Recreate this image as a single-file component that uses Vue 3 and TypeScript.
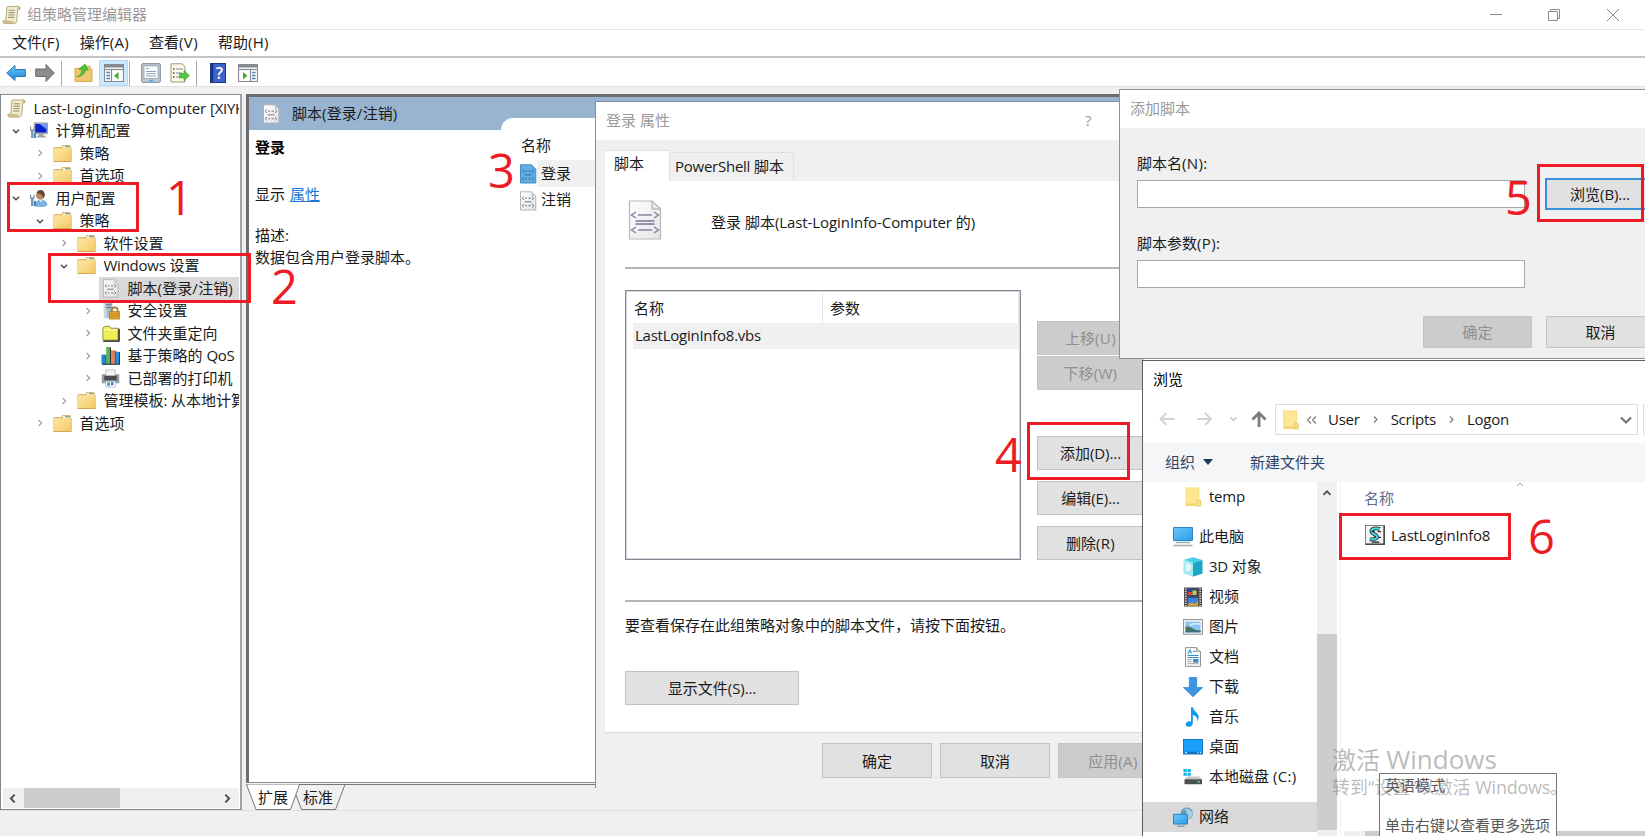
<template>
  <div class="desktop">
    <!-- Icon symbols -->
    <svg class="sprite" width="0" height="0" aria-hidden="true">
      <defs>
        <linearGradient id="g-folder" x1="0" y1="0" x2="1" y2="1">
          <stop offset="0" stop-color="#ffeaa8" />
          <stop offset="1" stop-color="#f3c766" />
        </linearGradient>
        <linearGradient id="g-screen" x1="0" y1="0" x2="1" y2="1">
          <stop offset="0" stop-color="#6cc8fb" />
          <stop offset="1" stop-color="#2a9be6" />
        </linearGradient>
        <linearGradient id="g-blue" x1="0" y1="0" x2="0" y2="1">
          <stop offset="0" stop-color="#6cc6f7" />
          <stop offset="1" stop-color="#1787d6" />
        </linearGradient>
        <linearGradient id="g-paper" x1="0" y1="0" x2="1" y2="1">
          <stop offset="0" stop-color="#ffffff" />
          <stop offset="1" stop-color="#e4e4e4" />
        </linearGradient>
      </defs>
      <symbol id="i-scroll" viewBox="0 0 20 20">
        <path d="M5 2 Q5 1 7 1 H17.5 Q19.5 1.5 19 4 H16.5 L15.5 16.5 Q15 19 12.5 19 H2.5 Q.5 18.5 1 16 H4 Z" fill="#f4ecc9" stroke="#a89a72" stroke-width=".9" />
        <path d="M1 16 H12 Q11.5 19 13 19 H2.5 Q.5 18.5 1 16 Z" fill="#cdbb8a" />
        <path d="M16.5 4 H19 Q19.6 1.4 17.6 1 Q16.2 1.2 16.5 4 Z" fill="#c4b180" />
        <path d="M7 5 h6.5 M6.8 7.5 h6.5 M6.6 10 h6.5 M6.4 12.5 h6.5" stroke="#9a9684" stroke-width="1.1" />
      </symbol>
      <symbol id="i-folder" viewBox="0 0 18 18">
        <path d="M.5 3 H8 L9 1 H16 L17 2.2 V4 H17.6 V17 H.5 Z" fill="#d3a64f" />
        <path d="M9.3 1.6 H15.8 V4 H9 Z" fill="#fff6d8" />
        <path d="M11.5 1.8 h4 v1.4 h-4 z" fill="#5aa5d8" />
        <path d="M1 4 H8.5 L9.5 3.6 H17 V16.2 H1 Z" fill="url(#g-folder)" />
      </symbol>
      <symbol id="i-folder-plain" viewBox="0 0 18 22">
        <path d="M1 .5 H16 V14 L17.5 15 V21 H1 Z" fill="#f7d774" />
        <path d="M2 1.5 H15 V18 H2 Z" fill="#fde695" />
        <path d="M13.5 14.5 H17.5 V21 H13.5 Z" fill="#fbe08a" stroke="#e2b94c" stroke-width=".6" />
      </symbol>
      <symbol id="i-computer" viewBox="0 0 20 18">
        <rect x="5.5" y="1" width="14" height="11.5" fill="#d4d4d4" stroke="#8d8d8d" stroke-width=".8" />
        <rect x="6.5" y="2" width="12" height="9.3" fill="#0b24c8" />
        <path d="M11 2 H18.5 V8 Z" fill="#6f9cf3" />
        <path d="M10 12.5 h5 v2 h2.5 v1.8 h-9 v-1.8 h1.5 z" fill="#a3a3a3" />
        <path d="M1 4.5 v4 l1.2 1.5 v7 h2.4 v-7 l1.4 -1.5 v-4 h-1.2 v3.2 h-2.6 v-3.2 z" fill="#7d99ab" />
        <path d="M5 12 h2.4 v5 h-2.4 z" fill="#3b8fd0" />
      </symbol>
      <symbol id="i-user" viewBox="0 0 20 20">
        <path d="M6.5 18.5 Q6 11.5 12.5 11 Q19.5 11.5 19.5 17 Q16 20 6.5 18.5 Z" fill="#7db2de" />
        <circle cx="12" cy="6.5" r="4.6" fill="#b98a5e" />
        <path d="M8 4.5 Q8.5 1 12.5 1 Q17 1.5 16.5 7 L15 9.5 Q14.8 5 8 4.5 Z" fill="#5e4a3a" />
        <path d="M10.5 11.5 l2 2.5 l2 -2.5 z" fill="#dcebf7" />
        <path d="M1 6 v3.5 l1.2 1.5 v7 h2.4 v-7 l1.4 -1.5 v-3.5 h-1.2 v3 h-2.6 v-3 z" fill="#7390a8" />
        <path d="M5.2 12.5 h2.2 v5.5 h-2.2 z" fill="#4b7fc0" />
      </symbol>
      <symbol id="i-script" viewBox="0 0 18 20">
        <path d="M1.5 .8 H12.5 L16.8 5 V19 H1.5 Z" fill="url(#g-paper)" stroke="#b3b3b3" />
        <path d="M12.5 .8 V5 H16.8 Z" fill="#cfcfcf" />
        <path d="M5 5.5 L3.2 7.2 L5 9 M13 5.5 L14.8 7.2 L13 9 M6 7.2 h2 M9.5 7.2 h2.5 M5.5 10.8 h7 M5 13 L3.2 14.7 L5 16.4 M13 13 L14.8 14.7 L13 16.4 M6 14.7 h2 M9.5 14.7 h2.5" fill="none" stroke="#77748c" stroke-width="1" />
      </symbol>
      <symbol id="i-script-blue" viewBox="0 0 18 20">
        <path d="M1.5 .8 H12.5 L16.8 5 V19 H1.5 Z" fill="#62acdf" stroke="#3f8fcb" />
        <path d="M5 5.5 L3.2 7.2 L5 9 M13 5.5 L14.8 7.2 L13 9 M6 7.2 h2 M9.5 7.2 h2.5 M5.5 10.8 h7 M5 13 L3.2 14.7 L5 16.4 M13 13 L14.8 14.7 L13 16.4 M6 14.7 h2 M9.5 14.7 h2.5" fill="none" stroke="#2f6fa8" stroke-width="1" />
      </symbol>
      <symbol id="i-script-large" viewBox="0 0 34 40">
        <path d="M1.5 1 H24 L32.5 9 V39 H1.5 Z" fill="url(#g-paper)" stroke="#b9b9b9" stroke-width="1.2" />
        <path d="M24 1 V9 H32.5 Z" fill="#e9e9e9" stroke="#a8a8a8" />
        <path d="M8 12 L3.5 15 L8 18 M26 12 L30.5 15 L26 18 M10 15 H24 M8 27 L3.5 30 L8 33 M26 27 L30.5 30 L26 33 M10 30 H24" fill="none" stroke="#8884a6" stroke-width="1.5" />
        <path d="M7.5 21 H26.5 M7.5 24 H26.5" stroke="#77739a" stroke-width="1.5" />
      </symbol>
      <symbol id="i-security" viewBox="0 0 20 20">
        <path d="M3 1 H12 V18 H3 Z" fill="#a9bccb" />
        <path d="M3 1 H6 V18 H3 Z" fill="#cbd8e2" />
        <path d="M5 4 h6 M5 7 h6" stroke="#54697a" />
        <path d="M11.5 12 V9.5 Q11.5 6.8 14.5 6.8 Q17.5 6.8 17.5 9.5 V12" fill="none" stroke="#9c8238" stroke-width="1.8" />
        <rect x="9" y="11" width="10.5" height="8" fill="#e0a62c" stroke="#a87714" stroke-width=".7" />
        <path d="M9.5 13.5 h9.5 M9.5 16 h9.5" stroke="#b98419" stroke-width=".8" />
      </symbol>
      <symbol id="i-redirect" viewBox="0 0 20 18">
        <path d="M2 3.5 L3.5 1.5 H9 L10.5 3.5 H18 V16 H2 Z" fill="#f0ee56" stroke="#8f8c40" />
        <path d="M19 4 V17 H2.5" fill="none" stroke="#111" stroke-width="1.4" />
        <path d="M3 5 h14.5" stroke="#ffffd0" />
      </symbol>
      <symbol id="i-qos" viewBox="0 0 20 20">
        <path d="M.5 9 h4 v10 h-4 z" fill="#1b8ad0" />
        <path d="M5.5 1 h4 v18 h-4 z" fill="#56b648" />
        <path d="M10.5 4.5 h4 v14.5 h-4 z" fill="#ee7d55" />
        <path d="M15.5 6 h3.6 v13 h-3.6 z" fill="#2a8fdc" />
        <path d="M5 9.5 V19.5 M10 1.5 V19.5 M15 5 V19.5 M19.5 6.5 V19.5 M1 19.3 H19.5" stroke="#1d2b38" />
      </symbol>
      <symbol id="i-printer" viewBox="0 0 20 20">
        <path d="M5 1 H15 V8 H5 Z" fill="#f3f3f3" stroke="#aeb4ba" stroke-width=".8" />
        <path d="M.8 5.5 H5 V8 H15 V5.5 H19.2 V15 H.8 Z" fill="#979a9e" />
        <path d="M3.5 7 H16.5 V12 H3.5 Z" fill="#4b4d52" />
        <path d="M5 13 H15 V19 H5 Z" fill="#fff" stroke="#a9bcc9" stroke-width=".8" />
        <path d="M6.5 14 h3 v4 h-3 z" fill="#35b3c9" />
        <path d="M10.5 14 h2.5 v3 h-2.5 z" fill="#2d6cb8" />
      </symbol>
      <symbol id="i-chev-down" viewBox="-1 -1 12 12">
        <path d="M2 3.8 L5 6.8 L8 3.8" fill="none" stroke="#4a4a4a" stroke-width="1.4" />
      </symbol>
      <symbol id="i-chev-right" viewBox="-1 -1 12 12">
        <path d="M3.6 2 L6.6 5 L3.6 8" fill="none" stroke="#a3a3a3" stroke-width="1.3" />
      </symbol>
      <symbol id="i-pc" viewBox="0 0 20 20">
        <path d="M.5 .5 H19.5 V13.5 H.5 Z" fill="url(#g-screen)" stroke="#2c86c4" />
        <path d="M3 15.5 H17 M.5 18.5 H19.5" stroke="#9dadb8" stroke-width="1.5" />
      </symbol>
      <symbol id="i-cube" viewBox="0 0 20 20">
        <path d="M.5 3 L10 .3 L19.5 3 L10 6 Z" fill="#47d0e6" />
        <path d="M.5 3 L10 6 V19.7 L.5 16.5 Z" fill="#a5eaf3" />
        <path d="M19.5 3 L10 6 V19.7 L19.5 16.5 Z" fill="#1ba6c8" />
        <path d="M3 6 L8 7.5 V13 L3 15 Z" fill="#dff8fb" />
      </symbol>
      <symbol id="i-video" viewBox="0 0 20 20">
        <rect x="1" y=".5" width="18" height="19" fill="#4c4a48" />
        <path d="M2.8 1.5 V19 M17.2 1.5 V19" stroke="#d8d8d8" stroke-width="1.8" stroke-dasharray="1.2 1.2" />
        <rect x="5" y="1.5" width="10" height="8" fill="#27498c" />
        <rect x="5" y="10.8" width="10" height="8" fill="#3b80e4" />
        <path d="M5 5 h4 v3 h-4 z" fill="#e8423a" />
        <path d="M9.5 3.5 h4 v4.5 h-4 z" fill="#dfc52c" />
        <path d="M5 18.8 V17 L9 15.5 L12 17 L15 13.5 V18.8 Z" fill="#e0a52a" />
      </symbol>
      <symbol id="i-picture" viewBox="0 0 20 16">
        <rect x=".6" y=".6" width="18.8" height="14.6" fill="#fff" stroke="#929292" stroke-width="1.1" />
        <rect x="2.5" y="2.5" width="15" height="10.8" fill="#8cc5f4" />
        <path d="M2.5 7.5 Q7 7 10 9.5 T17.5 11 V13.3 H2.5 Z" fill="#47745e" />
        <path d="M7 6 q4 -2 10 -1" stroke="#e4f2fd" stroke-width="1.5" fill="none" />
        <path d="M2.5 12 h15 v1.3 h-15 z" fill="#3b6e93" />
      </symbol>
      <symbol id="i-document" viewBox="0 0 18 20">
        <path d="M1.5 .6 H12.5 L16.5 4.5 V19.4 H1.5 Z" fill="#fafafa" stroke="#929292" />
        <path d="M12.5 .6 V4.5 H16.5" fill="#d8d8d8" stroke="#929292" stroke-width=".8" />
        <path d="M4 7 L6 3 L7.5 6.5 M9 4.5 h2.5 M3.5 8.5 h11 M3.5 10.5 h11" stroke="#2a92d4" fill="none" stroke-width="1.1" />
        <path d="M3.5 12.7 h4 M3.5 14.7 h4 M3.5 16.7 h11" stroke="#a4a4a4" />
        <rect x="9" y="12" width="5.5" height="3.6" fill="#3b8bc6" />
      </symbol>
      <symbol id="i-download" viewBox="0 0 20 20">
        <path d="M6.3 .3 H13.7 V10.5 H19.7 L10 19.8 L.3 10.5 H6.3 Z" fill="#3b95e0" stroke="#2178c4" stroke-width=".6" />
      </symbol>
      <symbol id="i-music" viewBox="0 0 20 20">
        <path d="M8 .3 H9.8 Q10.5 3.5 13.5 5.5 Q17.5 9 14 14.5 Q15.2 9 9.8 8 V16.5 Q9.5 19.6 6 19.7 Q2.5 19.6 2.6 17.2 Q3 14.8 6.5 14.3 L8 14.4 Z" fill="#0a9af8" />
      </symbol>
      <symbol id="i-desktop" viewBox="0 0 20 16">
        <rect x=".5" y=".5" width="19" height="14.5" fill="#18a0fb" stroke="#1277c0" />
        <path d="M1 12.8 H19 V14.6 H1 Z" fill="#0c6fbe" />
        <path d="M2 13.7 h2 M14.5 13.7 h1.2 M17 13.7 h1.2" stroke="#fff" />
      </symbol>
      <symbol id="i-disk" viewBox="0 0 20 18">
        <path d="M.5 1 h3.3 v3 h-3.3 z M4.5 1 h3.3 v3 h-3.3 z M.5 4.7 h3.3 v3 h-3.3 z M4.5 4.7 h3.3 v3 h-3.3 z" fill="#13b1ea" />
        <path d="M4 8.5 H16.5 L19 11.5 H1.5 Z" fill="#c6c9cb" />
        <rect x="1.5" y="11.3" width="17.5" height="4.9" rx=".8" fill="#4c4f52" />
        <path d="M14.5 13.8 h2.5" stroke="#48e05b" stroke-width="1.5" />
      </symbol>
      <symbol id="i-network" viewBox="0 0 20 20">
        <circle cx="13.8" cy="6.6" r="6.2" fill="#5e9fc0" />
        <path d="M11 2 Q15 4 13 7 T16 12 Q20 9 19.5 5.5 Q16 .5 11 2 Z" fill="#a9d0dd" />
        <path d="M.5 7.3 H14.5 V17 H.5 Z" fill="url(#g-screen)" stroke="#2382c2" />
        <path d="M4 19.2 H11.5" stroke="#8c9ba6" stroke-width="1.5" />
      </symbol>
      <symbol id="i-vbs" viewBox="0 0 21 21">
        <rect x=".5" y=".5" width="20" height="20" fill="#f5f5f5" stroke="#777" />
        <path d="M20 1 V20 H1" fill="none" stroke="#333" stroke-width="1.4" />
        <path d="M15.5 4.5 Q12 2.8 8 4.3 Q5 6.5 9 9.2 Q13 11 12.5 13.2 Q11 15.5 5 15" fill="none" stroke="#222" stroke-width="4" />
        <path d="M15.5 4.5 Q12 2.8 8 4.3 Q5 6.5 9 9.2 Q13 11 12.5 13.2 Q11 15.5 5 15" fill="none" stroke="#3fd3da" stroke-width="2.4" />
        <path d="M7 18 h8 M13 7 h4 M7 6.8 h3 M9.5 12.5 h2 M14.5 13 h2" stroke="#111" stroke-width="1.1" />
      </symbol>
    </svg>

    <!-- Policy editor window -->
    <section class="editor">
      <header class="editor__title">
        <svg class="editor__logo"><use href="#i-scroll" /></svg>
        <span class="editor__caption">组策略管理编辑器</span>
        <svg class="editor__controls" viewBox="0 0 136 20">
          <path d="M0 9.5 H12" stroke="#8b8b8b" />
          <path d="M58.5 6.5 h9 v9 h-9 z M60.5 6.5 v-2 h9 v9 h-2" fill="none" stroke="#8b8b8b" />
          <path d="M117 4 L129 16 M129 4 L117 16" stroke="#8b8b8b" />
        </svg>
      </header>

      <nav class="editor__menu">
        <Txt v-for="m in menus" :key="m" :s="m" />
      </nav>

      <div class="editor__toolbar">
        <svg class="tool" viewBox="0 0 20 20">
          <path d="M.7 10 L9 2.5 V6.5 H19.3 V13.5 H9 V17.5 Z" fill="url(#g-blue)" stroke="#2b77ad" />
        </svg>
        <svg class="tool tool--forward" viewBox="0 0 20 20">
          <path d="M19.3 10 L11 1.5 V6 H.7 V13.5 H11 V18.5 Z" fill="#8c8c8c" stroke="#6e6e6e" />
        </svg>
        <i class="editor__sep" />
        <svg class="tool tool--up" viewBox="0 0 20 20">
          <path d="M1 5 H8 L9.5 3 H17 V6 H19 V19 H1 Z" fill="#efc76e" stroke="#c99c3d" stroke-width=".8" />
          <path d="M3 14 Q8 12 8.5 6.5 L5 6 L11.5 .5 L15 7 L12 6.8 Q11 13.5 3 14 Z" fill="#4cc13c" stroke="#2f9926" stroke-width=".6" />
        </svg>
        <span class="tool-active">
          <svg class="tool" viewBox="0 0 20 20">
            <rect x=".5" y="1.5" width="19" height="17" fill="#f4f4f4" stroke="#868b92" />
            <path d="M1 2 h18 v2.5 h-18 z" fill="#848c96" />
            <path d="M1 6.5 H19 M7.5 7 V18" stroke="#868b92" />
            <path d="M2.5 9.5 h3.5 M2.5 12.5 h3.5 M2.5 15.5 h3.5" stroke="#5385b8" stroke-width="1.3" />
            <rect x="9" y="8" width="8.5" height="9.5" fill="#fff" />
            <path d="M14.5 9 V16.5 L10 12.7 Z" fill="#3dae33" />
          </svg>
        </span>
        <i class="editor__sep editor__sep--tight" />
        <svg class="tool tool--props" viewBox="0 0 20 20">
          <rect x=".7" y=".7" width="18.6" height="18.6" rx="1" fill="#c3ccd6" stroke="#7d8791" />
          <rect x="3" y="3" width="14" height="12.5" fill="#fff" stroke="#94a1ae" stroke-width=".8" />
          <path d="M5 5.5 h3 M5 8.5 h10 M5 10.7 h10 M5 13 h10" stroke="#8ba1b8" />
          <path d="M8 17.5 h4" stroke="#28b4e6" stroke-width="1.6" />
        </svg>
        <svg class="tool tool--export" viewBox="0 0 20 20">
          <path d="M1 .8 H12 L15 4 V19 H1 Z" fill="#fdf8e4" stroke="#9c9680" />
          <path d="M3 6 h1.5 M3 10 h1.5 M3 14 h1.5" stroke="#444" stroke-width="1.4" />
          <path d="M6 6 h7 M6 10 h6 M6 14 h6" stroke="#8a85a8" stroke-width="1.1" />
          <path d="M9.5 10.5 H14 V7.5 L19.5 12.7 L14 17.8 V15 H9.5 Z" fill="#55c644" stroke="#3a9e2d" stroke-width=".6" />
        </svg>
        <i class="editor__sep editor__sep--mid" />
        <svg class="tool tool--help" viewBox="0 0 16 20">
          <rect x=".5" y=".5" width="15" height="19" fill="#3f63cc" stroke="#1b3686" />
          <path d="M1 1 h2.3 v18 h-2.3 z" fill="#1a3488" />
          <text x="9.4" y="15.8" text-anchor="middle" class="tool__mark">?</text>
        </svg>
        <svg class="tool tool--pane" viewBox="0 0 20 20">
          <rect x=".5" y="1.5" width="19" height="17" fill="#f4f4f4" stroke="#868b92" />
          <path d="M1 2 h18 v2.5 h-18 z" fill="#848c96" />
          <path d="M1 6.5 H19 M12.5 7 V18" stroke="#868b92" />
          <path d="M14 9.5 h3.5 M14 12.5 h3.5 M14 15.5 h3.5" stroke="#5385b8" stroke-width="1.3" />
          <rect x="2.5" y="8" width="8.5" height="9.5" fill="#fff" />
          <path d="M5 9 V16.5 L9.5 12.7 Z" fill="#3dae33" />
        </svg>
      </div>

      <div class="editor__body">
        <!-- Navigation tree -->
        <div class="tree">
          <div class="tree__rows">
            <div v-for="(n, i) in tree" :key="i" :class="['node', `node--l${n.level}`]">
              <svg v-if="n.level > 0" class="node__chev">
                <use v-if="n.state" :href="n.state === 'open' ? '#i-chev-down' : '#i-chev-right'" />
              </svg>
              <span :class="['node__main', { 'node__main--selected': n.selected }]">
                <svg class="node__icon"><use :href="`#i-${n.icon}`" /></svg>
                <Txt class="node__label" :s="n.label" />
              </span>
            </div>
          </div>
          <div class="tree__scroll">
            <svg class="tree__arrow" viewBox="0 0 10 10"><path d="M7 1.5 L3.5 5 L7 8.5" fill="none" stroke="#505050" stroke-width="1.8" /></svg>
            <i class="tree__thumb" />
            <svg class="tree__arrow tree__arrow--end" viewBox="0 0 10 10"><path d="M3 1.5 L6.5 5 L3 8.5" fill="none" stroke="#505050" stroke-width="1.8" /></svg>
          </div>
        </div>

        <!-- Result pane -->
        <div class="result">
          <div class="result__frame">
            <div class="result__head">
              <svg class="result__icon"><use href="#i-script" /></svg>
              <Txt class="result__title" s="脚本(登录/注销)" />
            </div>
            <div class="result__cols">
              <div class="result__desc">
                <b>登录</b>
                <p class="result__show">显示 <a>属性</a></p>
                <p class="result__about">描述:<br>数据包含用户登录脚本。</p>
              </div>
              <div class="result__list">
                <div class="result__colhead">名称</div>
                <div class="result__item result__item--active">
                  <svg><use href="#i-script-blue" /></svg><span>登录</span>
                </div>
                <div class="result__item">
                  <svg><use href="#i-script" /></svg><span>注销</span>
                </div>
              </div>
            </div>
          </div>
          <div class="result__tabs">
            <svg class="result__tabshape" viewBox="0 0 102 28">
              <path d="M50 11 L55.5 25.5 H89.5 L99 .5" fill="#f0f0f0" stroke="#777" />
              <path d="M.5 .5 L10 25.5 H44.5 L53.5 .5" fill="#fff" stroke="#777" />
              <path d="M53.5 .5 H102" stroke="#777" />
            </svg>
            <span>扩展</span><span>标准</span>
          </div>
        </div>
      </div>
      <footer class="editor__status" />
    </section>

    <!-- Logon properties dialog -->
    <section class="props">
      <header class="props__title"><span>登录 属性</span><span class="props__help">?</span></header>
      <div class="props__tabs">
        <span class="props__tab props__tab--active">脚本</span>
        <span class="props__tab"><Txt s="PowerShell 脚本" /></span>
      </div>
      <div class="props__page">
        <div class="props__intro">
          <svg><use href="#i-script-large" /></svg>
          <Txt s="登录 脚本(Last-LoginInfo-Computer 的)" />
        </div>
        <hr class="props__rule">
        <div class="props__main">
          <div class="listbox">
            <div class="listbox__head"><span>名称</span><span>参数</span></div>
            <div class="listbox__row"><Txt s="LastLoginInfo8.vbs" /></div>
          </div>
          <div class="props__side">
            <span v-for="b in sideButtons" :key="b.label" :class="['btn', { 'btn--disabled': b.disabled, 'btn--gap': b.gap }]">
              <Txt :s="b.label" />
            </span>
          </div>
        </div>
        <hr class="props__rule props__rule--low">
        <p class="props__hint">要查看保存在此组策略对象中的脚本文件，请按下面按钮。</p>
        <span class="btn btn--files"><Txt s="显示文件(S)..." /></span>
      </div>
      <footer class="props__foot">
        <span class="btn">确定</span>
        <span class="btn">取消</span>
        <span class="btn btn--disabled"><Txt s="应用(A)" /></span>
      </footer>
    </section>

    <!-- Add script dialog -->
    <section class="addscript">
      <header class="addscript__title">添加脚本</header>
      <div class="addscript__body">
        <Txt class="addscript__label" s="脚本名(N):" />
        <div class="addscript__line">
          <i class="addscript__input" />
          <span class="btn btn--focus"><Txt s="浏览(B)..." /></span>
        </div>
        <Txt class="addscript__label addscript__label--second" s="脚本参数(P):" />
        <div class="addscript__line"><i class="addscript__input" /></div>
        <div class="addscript__foot">
          <span class="btn btn--disabled">确定</span>
          <span class="btn">取消</span>
        </div>
      </div>
    </section>

    <!-- File browser dialog -->
    <section class="browse">
      <header class="browse__title">浏览</header>
      <div class="browse__nav">
        <svg class="browse__arrows" viewBox="0 0 132 30">
          <path d="M31.5 15 H17.5 M23.5 9 L17.5 15 L23.5 21 M54 15 H68 M62 9 L68 15 L62 21" fill="none" stroke="#d2d2d2" stroke-width="1.8" />
          <path d="M87.5 13.5 L90.5 16.5 L93.5 13.5" fill="none" stroke="#cfcfcf" stroke-width="1.8" />
          <path d="M116 23 V9 M109.5 15.5 L116 9 L122.5 15.5" fill="none" stroke="#7b7b7b" stroke-width="2.8" />
        </svg>
        <div class="address">
          <svg class="address__folder"><use href="#i-folder-plain" /></svg>
          <svg class="address__more" viewBox="0 0 12 10"><path d="M5 1.5 L1.5 5 L5 8.5 M10 1.5 L6.5 5 L10 8.5" fill="none" stroke="#777" stroke-width="1.1" /></svg>
          <template v-for="(p, i) in crumbs" :key="p">
            <svg v-if="i > 0" class="address__sep" viewBox="0 0 9 9"><path d="M3 1.5 L6 4.5 L3 7.5" fill="none" stroke="#777" stroke-width="1.1" /></svg>
            <Txt class="address__part" :s="p" />
          </template>
          <svg class="address__drop" viewBox="0 0 12 10"><path d="M1 2.5 L6 7.5 L11 2.5" fill="none" stroke="#777" stroke-width="2.2" /></svg>
        </div>
        <i class="browse__search" />
      </div>
      <div class="browse__bar">
        <span>组织</span><i class="browse__caret" /><span>新建文件夹</span>
      </div>
      <div class="browse__body">
        <div class="places">
          <div v-for="p in places" :key="p.label" :class="['place', { 'place--root': p.root, 'place--selected': p.selected }]">
            <svg><use :href="`#i-${p.icon}`" /></svg>
            <Txt class="place__label" :s="p.label" />
          </div>
        </div>
        <div class="browse__scroll">
          <svg viewBox="0 0 10 10"><path d="M1.5 6.8 L5 3.3 L8.5 6.8" fill="none" stroke="#505050" stroke-width="1.8" /></svg>
          <i />
        </div>
        <div class="files">
          <div class="files__head">
            <span>名称</span>
            <svg viewBox="0 0 8 5"><path d="M1 4 L4 1 L7 4" fill="none" stroke="#999" /></svg>
          </div>
          <div class="files__row">
            <svg><use href="#i-vbs" /></svg>
            <Txt class="files__name" s="LastLoginInfo8" />
          </div>
          <div class="files__hscroll"><i /></div>
        </div>
      </div>
    </section>

    <!-- Input method tooltip and activation watermark -->
    <div class="tooltip"><span>英语模式</span><span>单击右键以查看更多选项</span></div>
    <div class="watermark">
      <Txt class="watermark__title" s="激活 Windows" />
      <Txt class="watermark__text" s="转到“设置”以激活 Windows。" />
    </div>

    <!-- Step annotations -->
    <i v-for="n in [1, 2, 4, 5, 6]" :key="`b${n}`" :class="['mark', `mark--${n}`]" />
    <span v-for="n in 6" :key="`n${n}`" :class="['step', `step--${n}`]">{{ n }}</span>
  </div>
</template>

<script setup lang="ts">
import { h } from 'vue'

interface TreeNode {
  level: number
  label: string
  icon: string
  state?: 'open' | 'closed'
  selected?: boolean
}

interface SideButton {
  label: string
  disabled?: boolean
  gap?: boolean
}

interface Place {
  label: string
  icon: string
  root?: boolean
  selected?: boolean
}

// Words are set a little tighter than the Chinese text, access keys a little wider
const latinClass = (part: string) => {
  if (part.length <= 4 && /[()/]/.test(part)) return 'latin latin--key'
  if (/-|\.\.\./.test(part)) return 'latin latin--long'
  return 'latin'
}

const Txt = (props: { s: string }) =>
  h(
    'span',
    { class: 'txt' },
    props.s
      .split(/([\x21-\x7e]+)/)
      .filter(Boolean)
      .map(part => (/^[\x21-\x7e]/.test(part) ? h('span', { class: latinClass(part) }, part) : part))
  )
Txt.props = ['s']

const menus: string[] = ['文件(F)', '操作(A)', '查看(V)', '帮助(H)']

const tree: TreeNode[] = [
  { level: 0, label: 'Last-LoginInfo-Computer [XIYK', icon: 'scroll' },
  { level: 1, label: '计算机配置', icon: 'computer', state: 'open' },
  { level: 2, label: '策略', icon: 'folder', state: 'closed' },
  { level: 2, label: '首选项', icon: 'folder', state: 'closed' },
  { level: 1, label: '用户配置', icon: 'user', state: 'open' },
  { level: 2, label: '策略', icon: 'folder', state: 'open' },
  { level: 3, label: '软件设置', icon: 'folder', state: 'closed' },
  { level: 3, label: 'Windows 设置', icon: 'folder', state: 'open' },
  { level: 4, label: '脚本(登录/注销)', icon: 'script', selected: true },
  { level: 4, label: '安全设置', icon: 'security', state: 'closed' },
  { level: 4, label: '文件夹重定向', icon: 'redirect', state: 'closed' },
  { level: 4, label: '基于策略的 QoS', icon: 'qos', state: 'closed' },
  { level: 4, label: '已部署的打印机', icon: 'printer', state: 'closed' },
  { level: 3, label: '管理模板: 从本地计算', icon: 'folder', state: 'closed' },
  { level: 2, label: '首选项', icon: 'folder', state: 'closed' }
]

const sideButtons: SideButton[] = [
  { label: '上移(U)', disabled: true },
  { label: '下移(W)', disabled: true },
  { label: '添加(D)...', gap: true },
  { label: '编辑(E)...' },
  { label: '删除(R)' }
]

const crumbs: string[] = ['User', 'Scripts', 'Logon']

const places: Place[] = [
  { label: 'temp', icon: 'folder-plain' },
  { label: '此电脑', icon: 'pc', root: true },
  { label: '3D 对象', icon: 'cube' },
  { label: '视频', icon: 'video' },
  { label: '图片', icon: 'picture' },
  { label: '文档', icon: 'document' },
  { label: '下载', icon: 'download' },
  { label: '音乐', icon: 'music' },
  { label: '桌面', icon: 'desktop' },
  { label: '本地磁盘 (C:)', icon: 'disk' },
  { label: '网络', icon: 'network', root: true, selected: true }
]
</script>

<style>
body {
  margin: 0;
  overflow: hidden;
}

.txt {
  white-space: pre;
}

.txt .latin {
  letter-spacing: -0.25px;
}

.txt .latin--key {
  letter-spacing: 0.35px;
}

.txt .latin--long {
  letter-spacing: -0.08px;
}
</style>

<style scoped>
.desktop {
  position: relative;
  width: 1645px;
  height: 836px;
  overflow: hidden;
  background: #f0f0f0;
  color: #1a1a1a;
  font-family: "Open Sans", "Noto Sans CJK SC", sans-serif;
  font-size: 15px;
  line-height: 20px;
  white-space: nowrap;
}

.desktop *,
.desktop *::before {
  box-sizing: border-box;
}

.desktop svg {
  display: block;
  flex-shrink: 0;
}

.sprite {
  position: absolute;
}

/* Editor window */
.editor {
  display: flex;
  flex-direction: column;
  height: 836px;
}

.editor__title {
  display: flex;
  align-items: center;
  height: 30px;
  padding-left: 2px;
  background: #fff;
  border-bottom: 1px solid #e8e8e8;
}

.editor__logo {
  width: 19px;
  height: 20px;
}

.editor__caption {
  margin-left: 6px;
  padding-bottom: 2px;
  color: #999;
}

.editor__controls {
  width: 136px;
  height: 20px;
  margin-left: auto;
  margin-right: 19px;
}

.editor__menu {
  display: flex;
  align-items: center;
  gap: 20px;
  height: 28px;
  padding: 0 0 2px 12px;
  background: #fff;
  border-bottom: 2px solid #c3c3c8;
}

.editor__toolbar {
  display: flex;
  align-items: center;
  height: 29px;
  padding: 2px 0 0 6px;
  background: #fff;
  border-bottom: 1px solid #e3e3e3;
}

.tool {
  width: 20px;
  height: 20px;
}

.tool--forward {
  margin-left: 9px;
}

.tool--up {
  width: 19px;
  margin-left: 12px;
}

.tool--props {
  margin-left: 11px;
}

.tool--export {
  margin-left: 9px;
}

.tool--help {
  width: 16px;
  margin-left: 13px;
}

.tool--pane {
  margin-left: 12px;
}

.tool__mark {
  fill: #fff;
  font-size: 16px;
  font-weight: 600;
}

.tool-active {
  display: flex;
  align-items: center;
  justify-content: center;
  width: 29px;
  height: 26px;
  margin-left: 6px;
  background: #cce8ff;
  border: 1px solid #b3dcfb;
}

.editor__sep {
  width: 1px;
  height: 25px;
  margin-left: 6px;
  background: #a9a9a9;
}

.editor__sep--tight {
  margin-left: 1px;
}

.editor__body {
  display: flex;
  gap: 4px;
  height: 723px;
  padding-top: 7px;
}

.editor__status {
  flex: 1;
  border-top: 1px solid #dedede;
}

/* Tree */
.tree {
  display: flex;
  flex-direction: column;
  width: 242px;
  height: 716px;
  padding: 2px 1px 1px 2px;
  background: #fff;
  border: 1px solid #828790;
  border-right: 2px solid #9fa3aa;
}

.tree__rows {
  flex: 1;
  overflow: hidden;
}

.node {
  display: flex;
  align-items: center;
  height: 22.5px;
}

.node--l0 {
  padding-left: 1px;
}

.node--l1 {
  padding-left: 7px;
}

.node--l2 {
  padding-left: 31px;
}

.node--l3 {
  padding-left: 55px;
}

.node--l4 {
  padding-left: 79px;
}

.node__chev {
  width: 12px;
  height: 12px;
}

.node__main {
  display: flex;
  flex: 1;
  align-items: center;
  height: 22.5px;
  margin-left: 3px;
}

.node--l1 .node__main,
.node--l2 .node__main,
.node--l3 .node__main,
.node--l4 .node__main {
  margin-left: 5px;
  padding-left: 2px;
}

.node__main--selected {
  background: #d9d9d9;
}

.node__icon {
  width: 19px;
  height: 19px;
}

.node__label {
  margin-left: 7.5px;
  padding-bottom: 1px;
}

.tree__scroll {
  display: flex;
  align-items: center;
  height: 20px;
  background: #f0f0f0;
}

.tree__arrow {
  width: 11px;
  height: 11px;
  margin: 0 6px 0 4px;
}

.tree__arrow--end {
  margin-left: auto;
}

.tree__thumb {
  width: 96px;
  height: 20px;
  background: #cdcdcd;
}

/* Result pane */
.result {
  flex: 1;
  display: flex;
  flex-direction: column;
}

.result__frame {
  height: 689px;
  background: #fff;
  border-top: 3px solid #6d6d6d;
  border-left: 3px solid #6d6d6d;
  border-bottom: 1px solid #8b8b8b;
}

.result__head {
  display: flex;
  align-items: center;
  height: 33px;
  padding-left: 13px;
  background: #99b4d1;
}

.result__icon {
  width: 18px;
  height: 20px;
  margin-right: 12px;
}

.result__title {
  padding-bottom: 2px;
}

.result__cols {
  display: flex;
  background: #fff;
}

.result__desc {
  width: 252px;
  padding: 7px 0 0 6px;
}

.result__desc b {
  display: block;
  color: #000;
}

.result__show {
  margin: 27px 0 0;
  word-spacing: 1px;
}

.result__show a {
  color: #1a7ad4;
  text-decoration: underline;
}

.result__about {
  margin: 20px 0 0;
  line-height: 22px;
}

.result__list {
  width: 600px;
  margin-top: -12px;
  padding: 0 0 0 16px;
  background: #fff;
  border-top-left-radius: 12px;
}

.result__colhead {
  height: 42px;
  padding: 17px 0 0 4px;
}

.result__item {
  display: flex;
  align-items: center;
  height: 27px;
}

.result__item svg {
  width: 18px;
  height: 20px;
  margin-left: 2px;
}

.result__item span {
  height: 27px;
  padding: 3px 30px 0 4px;
}

.result__item:last-child span {
  padding-top: 2px;
}

.result__item--active span {
  background: #f0f0f0;
}

.result__tabs {
  display: flex;
  align-items: center;
  gap: 15px;
  position: relative;
  height: 25px;
  margin-top: 1px;
  padding: 0 0 0 12px;
  border-top: 1px solid #777;
}

.result__tabs span {
  position: relative;
}

.desktop .result__tabshape {
  position: absolute;
  left: 0;
  top: -1px;
  width: 102px;
  height: 28px;
}

/* Buttons shared by the dialogs */
.btn {
  display: flex;
  flex-shrink: 0;
  align-items: center;
  justify-content: center;
  width: 110px;
  height: 35px;
  background: #e1e1e1;
  border: 1px solid #c2c2c2;
}

.btn--disabled {
  color: #8f8f8f;
  background: #ccc;
  border-color: #c4c4c4;
}

/* Properties dialog */
.props {
  position: absolute;
  left: 595px;
  top: 101px;
  width: 573px;
  height: 687px;
  background: #f0f0f0;
  border-top: 1px solid #7e8b98;
  border-left: 1px solid #8c8c8c;
}

.props__title {
  display: flex;
  align-items: center;
  height: 38px;
  padding: 0 0 2px 10px;
  color: #999;
  background: #fff;
}

.props__help {
  margin-left: 415px;
}

.props__tabs {
  display: flex;
  align-items: flex-end;
  height: 41px;
  padding-left: 9px;
}

.props__tab {
  height: 29px;
  padding: 3px 9px 0 5px;
  background: #f0f0f0;
  border: 1px solid #e0e0e0;
  border-left: 0;
  border-bottom: 0;
}

.props__tab--active {
  width: 65px;
  height: 31px;
  padding: 2px 0 0 9px;
  background: #fff;
}

.props__page {
  height: 552px;
  margin-left: 9px;
  padding-left: 20px;
  background: #fff;
  border-bottom: 1px solid #dcdcdc;
}

.props__intro {
  display: flex;
  align-items: center;
  height: 86px;
  padding-left: 3px;
}

.props__intro svg {
  width: 34px;
  height: 40px;
  margin-right: 49px;
  margin-top: -8px;
}

.props__intro .txt {
  margin-top: -4px;
}

.props__rule {
  height: 2px;
  margin: 0;
  background: #b4b4b4;
  border: 0;
}

.props__main {
  display: flex;
  gap: 16px;
  margin-top: 21px;
}

.listbox {
  width: 396px;
  height: 270px;
  padding: 0 1px;
  border: 1px solid #828790;
  box-shadow: inset 0 0 0 1px #d3d6dc;
}

.listbox__head {
  display: flex;
  height: 32px;
}

.listbox__head span {
  width: 197px;
  margin-top: 2px;
  padding: 5px 0 0 7px;
  border-right: 1px solid #e5e5e5;
}

.listbox__row {
  height: 26px;
  margin-left: 6px;
  padding: 2px 0 0 2px;
  background: #f0f0f0;
}

.props__side {
  display: flex;
  flex-direction: column;
  gap: 11px;
  padding-top: 31px;
}

.props__side .btn {
  width: 107px;
  height: 34px;
}

.props__side .btn--disabled + .btn--disabled {
  margin-top: -10px;
}

.props__side .btn--gap {
  margin-top: 35px;
}

.props__rule--low {
  margin-top: 40px;
}

.props__hint {
  margin: 13px 0 36px;
}

.btn--files {
  width: 174px;
  height: 34px;
}

.props__foot {
  display: flex;
  gap: 8px;
  padding: 10px 0 0 226px;
}

/* Add script dialog */
.addscript {
  position: absolute;
  left: 1119px;
  top: 89px;
  width: 560px;
  height: 270px;
  background: #f0f0f0;
  border: 1px solid #919191;
}

.addscript__title {
  height: 38px;
  padding: 8px 0 0 10px;
  color: #999;
  background: #fff;
}

.addscript__body {
  display: flex;
  flex-direction: column;
  padding: 25px 0 0 17px;
}

.addscript__label {
  height: 20px;
}

.addscript__label--second {
  margin-top: 21px;
}

.addscript__line {
  display: flex;
  align-items: center;
  gap: 20px;
  height: 36px;
  margin-top: 3px;
}

.addscript__input {
  width: 388px;
  height: 28px;
  background: #fff;
  border: 1px solid #a8a8a8;
}

.btn--focus {
  height: 32px;
  border: 2px solid #3a8fdb;
}

.addscript__foot {
  display: flex;
  gap: 14px;
  padding: 24px 0 0 286px;
}

.addscript__foot .btn {
  width: 109px;
  height: 32px;
}

/* Browse dialog */
.browse {
  position: absolute;
  left: 1142px;
  top: 360px;
  width: 540px;
  height: 500px;
  background: #fff;
  border: 1px solid #5f5f5f;
}

.browse__title {
  height: 43px;
  padding: 8px 0 0 10px;
  color: #000;
}

.browse__nav {
  display: flex;
  height: 39px;
}

.browse__arrows {
  width: 132px;
  height: 30px;
}

.address {
  display: flex;
  flex-shrink: 0;
  align-items: center;
  width: 363px;
  height: 31px;
  padding-left: 6px;
  border: 1px solid #dcdcdc;
}

.address__folder {
  width: 17px;
  height: 20px;
}

.address__more {
  width: 12px;
  height: 10px;
  margin: 0 10px 0 7px;
}

.address__part {
  padding-bottom: 2px;
}

.address__sep {
  width: 9px;
  height: 9px;
  margin: 0 11px;
}

.address__drop {
  width: 12px;
  height: 10px;
  margin: 0 5px 0 auto;
}

.browse__search {
  flex: 1;
  height: 31px;
  margin-left: 5px;
  border: 1px solid #dcdcdc;
}

.browse__bar {
  display: flex;
  align-items: center;
  height: 39px;
  padding: 0 0 2px 22px;
  color: #2b4568;
  background: #f5f6f7;
}

.browse__caret {
  margin: 0 37px 0 8px;
  border: 5px solid transparent;
  border-top: 6px solid #1e395b;
  border-bottom: 0;
}

.browse__body {
  display: flex;
}

.places {
  width: 174px;
}

.place {
  display: flex;
  align-items: center;
  height: 30px;
  padding-left: 40px;
}

.place svg {
  width: 20px;
  height: 20px;
  margin-right: 6px;
}

.place__label {
  padding-bottom: 2px;
}

.place--root {
  margin-top: 10px;
  padding-left: 30px;
}

.place--selected {
  background: #d9d9d9;
}

.browse__scroll {
  width: 20px;
  background: #f0f0f0;
}

.browse__scroll svg {
  width: 10px;
  height: 10px;
  margin: 6px auto 0;
}

.browse__scroll i {
  display: block;
  height: 196px;
  margin-top: 136px;
  background: #cdcdcd;
}

.files {
  flex: 1;
  height: 354px;
  display: flex;
  flex-direction: column;
  margin-left: 3px;
  border-left: 1px solid #f2f2f2;
}

.files__head {
  display: flex;
  height: 39px;
  padding: 6px 0 0 23px;
  color: #5b6d8d;
}

.files__head svg {
  width: 8px;
  height: 5px;
  margin: -6px 0 0 122px;
}

.files__row {
  display: flex;
  align-items: center;
  height: 28px;
  padding-left: 24px;
}

.files__row svg {
  width: 20px;
  height: 20px;
  margin-right: 6px;
}

.files__name {
  padding-bottom: 1px;
}

.files__hscroll {
  height: 20px;
  margin: auto 0 -15px 3px;
  padding-left: 21px;
  background: #f0f0f0;
}

.files__hscroll i {
  display: block;
  height: 20px;
  background: #cdcdcd;
}

/* Overlays */
.tooltip {
  position: absolute;
  left: 1379px;
  top: 773px;
  display: flex;
  flex-direction: column;
  gap: 20px;
  width: 178px;
  height: 80px;
  padding: 1px 0 0 5px;
  color: #575757;
  background: #fff;
  border: 1px solid #767676;
}

.watermark {
  position: absolute;
  left: 1332px;
  top: 743px;
  display: flex;
  flex-direction: column;
  color: rgba(120, 120, 120, 0.5);
}

.watermark__title {
  font-size: 24px;
  line-height: 32px;
}

.watermark__title :deep(.latin) {
  font-size: 26px;
  letter-spacing: 0;
}

.watermark__text {
  font-size: 18px;
  line-height: 22px;
}

/* Annotations */
.mark {
  position: absolute;
  border: 3px solid #ed1c24;
}

.mark--1 {
  left: 7px;
  top: 182px;
  width: 132px;
  height: 50px;
}

.mark--2 {
  left: 48px;
  top: 253px;
  width: 203px;
  height: 50px;
}

.mark--4 {
  left: 1027px;
  top: 422px;
  width: 103px;
  height: 58px;
}

.mark--5 {
  left: 1537px;
  top: 164px;
  width: 107px;
  height: 58px;
}

.mark--6 {
  left: 1339px;
  top: 513px;
  width: 172px;
  height: 47px;
}

.step {
  position: absolute;
  color: #ed1c24;
  font-size: 47px;
  line-height: 60px;
}

.step--1 {
  left: 166px;
  top: 167px;
}

.step--2 {
  left: 271px;
  top: 256px;
}

.step--3 {
  left: 488px;
  top: 140px;
}

.step--4 {
  left: 995px;
  top: 424px;
}

.step--5 {
  left: 1505px;
  top: 167px;
}

.step--6 {
  left: 1528px;
  top: 506px;
}
</style>
